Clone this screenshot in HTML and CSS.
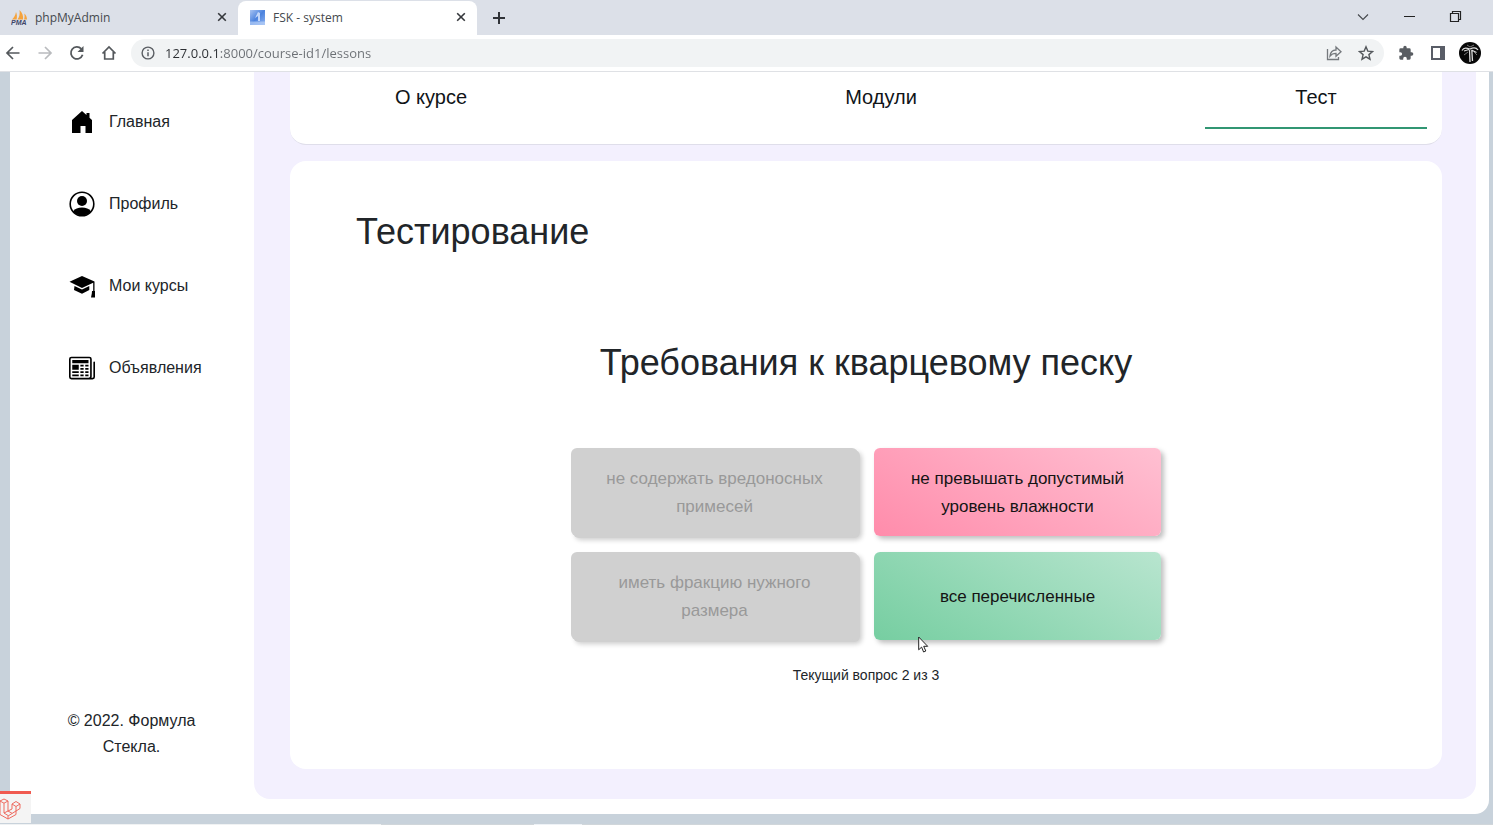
FILE: index.html
```html
<!DOCTYPE html>
<html lang="ru">
<head>
<meta charset="utf-8">
<meta name="viewport" content="width=device-width, initial-scale=1">
<title>FSK - system</title>
<link rel="stylesheet" href="styles.css">
</head>
<body>
<div class="browser">
  <div class="tabstrip">
    <div class="tab">
      <svg class="favicon" viewBox="0 0 17 17" aria-hidden="true">
        <path d="M1 10.500C3 9 4.500 6 5 3c1 2 1.200 5 .6 7.500zM6.500 10.500C8.500 8 9 5 8.500 1c3 3 4 6 3.500 9.500zM13 10.500c.8-2 .7-4 .2-6 2 1.500 2.800 4 2.800 6z" fill="#f5a33c"/>
        <text class="pma" x="0" y="16">PMA</text>
      </svg>
      <span class="tab-title">phpMyAdmin</span>
      <button class="icon-btn tab-close" aria-label="Закрыть вкладку phpMyAdmin"><svg width="10" height="10" viewBox="0 0 10 10"><path d="M1.200 1.200l7.600 7.600M8.800 1.200L1.200 8.800" stroke="#34373b" stroke-width="1.600"/></svg></button>
    </div>
    <div class="tab tab-active">
      <svg class="favicon" viewBox="0 0 17 17" aria-hidden="true">
        <defs><linearGradient id="fsk" x1="0" y1="0" x2="1" y2="1"><stop offset="0" stop-color="#a9c4f2"/><stop offset=".5" stop-color="#4c83de"/><stop offset="1" stop-color="#8fb3f0"/></linearGradient></defs>
        <rect x="1" y="1" width="15" height="15" fill="url(#fsk)"/>
        <path d="M9 3l2 1v8H9V7L6 9z" fill="#dce8ff" opacity=".8"/><path d="M1 12.500h15V16H1z" fill="#b8d0f8" opacity=".7"/>
      </svg>
      <span class="tab-title">FSK - system</span>
      <button class="icon-btn tab-close" aria-label="Закрыть вкладку FSK"><svg width="10" height="10" viewBox="0 0 10 10"><path d="M1.200 1.200l7.600 7.600M8.800 1.200L1.200 8.800" stroke="#34373b" stroke-width="1.600"/></svg></button>
    </div>
    <button class="icon-btn new-tab" aria-label="Новая вкладка"><svg width="14" height="14" viewBox="0 0 14 14"><path d="M7 1v12M1 7h12" stroke="#303338" stroke-width="2"/></svg></button>
    <div class="window-controls">
      <button class="icon-btn" aria-label="Поиск вкладок"><svg width="14" height="14" viewBox="0 0 14 14"><path d="M2 4.500l5 5 5-5" fill="none" stroke="#44474b" stroke-width="1.100"/></svg></button>
      <button class="icon-btn" aria-label="Свернуть"><svg width="14" height="14" viewBox="0 0 14 14"><path d="M2 6.500h11" stroke="#222" stroke-width="1"/></svg></button>
      <button class="icon-btn" aria-label="Развернуть"><svg width="14" height="14" viewBox="0 0 14 14"><path d="M2.500 3.500h8v8h-8zM4.500 3.500v-2h8v8h-2" fill="none" stroke="#222" stroke-width="1.200"/></svg></button>
    </div>
  </div>

  <div class="toolbar">
    <div class="nav-buttons">
      <button class="icon-btn" aria-label="Назад"><svg width="16" height="16" viewBox="0 0 16 16"><path d="M14.500 8H2.500M8 2L2 8l6 6" fill="none" stroke="#54585c" stroke-width="1.700"/></svg></button>
      <button class="icon-btn" aria-label="Вперёд"><svg width="16" height="16" viewBox="0 0 16 16"><path d="M1.500 8h12M8 2l6 6-6 6" fill="none" stroke="#b9bbbe" stroke-width="1.700"/></svg></button>
      <button class="icon-btn" aria-label="Обновить"><svg width="16" height="16" viewBox="0 0 16 16"><path d="M13.600 9.800A6 6 0 1 1 12.300 3.800" fill="none" stroke="#54585c" stroke-width="1.800"/><path d="M14.500 1v6h-6z" fill="#54585c"/></svg></button>
      <button class="icon-btn" aria-label="Домой"><svg width="16" height="16" viewBox="0 0 16 16"><path d="M1.500 8.500L8 2l6.500 6.500M3.700 7v7h8.600V7" fill="none" stroke="#54585c" stroke-width="1.700"/></svg></button>
    </div>
    <div class="omnibox">
      <svg width="14" height="14" viewBox="0 0 14 14" aria-hidden="true"><circle cx="7" cy="7" r="5.900" fill="none" stroke="#5a5e63" stroke-width="1.400"/><path d="M7 6.200v4M7 3.500V5" stroke="#5a5e63" stroke-width="1.500"/></svg>
      <input class="url" type="text" aria-label="Адресная строка" value="127.0.0.1:8000/course-id1/lessons">
      <button class="icon-btn" aria-label="Поделиться"><svg width="16" height="16" viewBox="0 0 16 16"><path d="M1.500 4v10.500h11V12" fill="none" stroke="#75797d" stroke-width="1.300"/><path d="M4 11c.5-4 2.500-6 6-6V2l5 4.700-5 4.500V8.300C7.500 8.300 5.500 9 4 11z" fill="none" stroke="#75797d" stroke-width="1.300"/></svg></button>
      <button class="icon-btn" aria-label="Добавить в закладки"><svg width="16" height="16" viewBox="0 0 16 16"><path d="M8 1.800l1.800 4.300 4.700.4-3.600 3.100 1.100 4.600L8 11.800l-4 2.400 1.100-4.600-3.600-3.100 4.700-.4z" fill="none" stroke="#54585c" stroke-width="1.400"/></svg></button>
    </div>
    <div class="extensions">
      <button class="icon-btn" aria-label="Расширения"><svg width="16" height="16" viewBox="0 0 24 24"><path d="M20.500 11H19V7a2 2 0 0 0-2-2h-4V3.500a2.500 2.500 0 0 0-5 0V5H4a2 2 0 0 0-2 2v3.800h1.500a2.700 2.700 0 0 1 0 5.400H2V20a2 2 0 0 0 2 2h3.800v-1.500a2.700 2.700 0 0 1 5.400 0V22H17a2 2 0 0 0 2-2v-4h1.500a2.500 2.500 0 0 0 0-5z" fill="#595d62"/></svg></button>
      <button class="icon-btn" aria-label="Боковая панель"><svg width="16" height="16" viewBox="0 0 16 16"><path d="M1 1h14v14H1zM3 3v10h7V3z" fill="#595d67" fill-rule="evenodd"/></svg></button>
      <button class="icon-btn avatar" aria-label="Профиль браузера"><svg width="22" height="22" viewBox="0 0 22 22"><circle cx="11" cy="11" r="11" fill="#080808"/><path d="M3 8.500C5 5 8 6 11 7c3-1.500 6-2 8 1M5 9l5-1.500M12.500 8l5 2.500M10.500 8l.5 12M12.800 8l.7 11" fill="none" stroke="#dcdcdc" stroke-width="1.300"/><path d="M5 13l4-3M15 10l3 3M8 3l3 2 4-2" fill="none" stroke="#777"/></svg></button>
    </div>
  </div>

  <div class="viewport">
    <div class="shell">
      <aside class="sidebar">
        <nav class="menu" aria-label="Меню">
          <a class="menu-link" href="#"><svg width="26" height="26" viewBox="0 0 26 26" aria-hidden="true"><path d="M13 2l4.500 4V4h3v4.700L23 11v13h-6.500v-7h-5v7H3V11z"/></svg>Главная</a>
          <a class="menu-link" href="#"><svg width="26" height="26" viewBox="0 0 26 26" aria-hidden="true"><circle cx="13" cy="13" r="11.800" fill="none" stroke="#000" stroke-width="1.600"/><circle cx="13" cy="10" r="5"/><path d="M4 20.500c2-3 5-4 9-4s7 1 9 4a11.800 11.800 0 0 1-18 0z"/></svg>Профиль</a>
          <a class="menu-link" href="#"><svg width="26" height="26" viewBox="0 0 26 26" aria-hidden="true"><path d="M13 3l12.500 5.500v10h-1.300V9.800L13 15 .5 8.700zM5.500 13l7.500 3.600 7.300-3.500v4L13 20.700 5 17zM23 18h3v2.500l.5 4H22l.8-4z"/></svg>Мои курсы</a>
          <a class="menu-link" href="#"><svg width="26" height="26" viewBox="0 0 16 16" aria-hidden="true"><path d="M0 2.500A1.500 1.500 0 0 1 1.500 1h11A1.500 1.500 0 0 1 14 2.500v10.528c0 .3-.05.654-.238.972h.738a.5.5 0 0 0 .5-.5v-9a.5.5 0 0 1 1 0v9a1.500 1.500 0 0 1-1.500 1.500H1.497A1.497 1.497 0 0 1 0 13.500zM12 14c.37 0 .654-.211.853-.441.092-.106.147-.279.147-.531V2.500a.5.5 0 0 0-.5-.5h-11a.5.5 0 0 0-.5.5v11c0 .278.223.5.497.5z"/><path d="M2 3h10v2H2zm0 3h4v3H2zm0 4h4v1H2zm0 2h4v1H2zm5-6h2v1H7zm3 0h2v1h-2zM7 8h2v1H7zm3 0h2v1h-2zm-3 2h2v1H7zm3 0h2v1h-2zm-3 2h2v1H7zm3 0h2v1h-2z"/></svg>Объявления</a>
        </nav>
        <p class="copyright">© 2022. Формула Стекла.</p>
      </aside>

      <main class="content">
        <nav class="course-tabs" aria-label="Разделы курса">
          <a class="course-tab" href="#">О курсе</a>
          <a class="course-tab" href="#">Модули</a>
          <a class="course-tab course-tab-active" href="#" aria-current="page">Тест</a>
        </nav>
        <section class="card">
          <h1 class="heading">Тестирование</h1>
          <h2 class="heading question">Требования к кварцевому песку</h2>
          <div class="answers">
            <button class="answer answer-off" disabled>не содержать вредоносных примесей</button>
            <button class="answer answer-wrong">не превышать допустимый уровень влажности</button>
            <button class="answer answer-off" disabled>иметь фракцию нужного размера</button>
            <button class="answer answer-right">все перечисленные</button>
          </div>
          <p class="progress">Текущий вопрос 2 из 3</p>
        </section>
      </main>
    </div>
    <button class="debugbar" aria-label="Laravel Debugbar"><svg width="24" height="24" viewBox="0 0 24 24"><path d="M0 4l4-2 4 2v10l4-2V7l4-2.500L20 7v4.500L16 14l-8 5v3l-8-4.500zM0 4l4 2.200L8 4M4 6.200V16l4 2.500M12 7l4 2.500L20 7M16 9.500V14M4 16l4-2M8 14l4 2.300M8 22l8-4.500V14" fill="none" stroke="#ee6a5f" stroke-width="1"/></svg></button>
  </div>
  <div class="desktop-edge"><span class="edge-light"></span><span class="edge-button"></span></div>
  <svg class="cursor" width="12" height="18" viewBox="0 0 12 18" aria-hidden="true"><path d="M.7 1v12.800l2.900-2.700 2 4.900 2.200-1-2.100-4.700h4z" fill="#fff" stroke="#222" stroke-width="1"/></svg>
</div>
</body>
</html>
```

FILE: styles.css
```css
* { box-sizing: border-box; }

body {
  margin: 0;
  font-family: "Liberation Sans", Arial, sans-serif;
  color: #212529;
}

a { color: inherit; text-decoration: none; }
h1, h2, p { margin: 0; }

.browser {
  position: relative;
  display: flex;
  flex-direction: column;
  min-height: 100vh;
  background: #c8d2db;
}

.icon-btn {
  display: flex;
  align-items: center;
  justify-content: center;
  padding: 0;
  border: 0;
  background: none;
}

/* Browser chrome */
.tabstrip {
  display: flex;
  align-items: stretch;
  height: 35px;
  padding-top: 1px;
  background: #dce0e8;
  font-family: "Open Sans", "Noto Sans", sans-serif;
  font-size: 12px;
  color: #45494e;
}

.tab {
  display: flex;
  align-items: center;
  gap: 7px;
  width: 238px;
  padding: 0 10px 2px 11px;
}

.tab-active {
  width: 239px;
  border-radius: 8px 8px 0 0;
  background: #fff;
}

.favicon { width: 17px; height: 17px; }
.pma { font: italic bold 7px "Liberation Sans", sans-serif; fill: #3d4468; }
.tab-title { flex: 1; }
.tab-close { width: 12px; height: 12px; }
.new-tab { width: 44px; }

.window-controls {
  display: flex;
  gap: 32px;
  margin-left: auto;
  padding: 0 31px 2px 0;
}

.toolbar {
  display: flex;
  align-items: center;
  gap: 14px;
  height: 37px;
  padding: 0 12px 0 5px;
  border-bottom: 1px solid #dfe1e5;
  background: #fff;
}

.nav-buttons { display: flex; gap: 16px; }

.omnibox {
  display: flex;
  flex: 1;
  align-items: center;
  gap: 16px;
  height: 28px;
  padding: 0 10px;
  border-radius: 14px;
  background: #f1f3f4;
}

.url {
  flex: 1;
  min-width: 0;
  margin-left: -6px;
  padding: 0;
  border: 0;
  outline: 0;
  background: linear-gradient(90deg, #2b2e32 54px, #6b6f74 54px);
  background-clip: text;
  -webkit-background-clip: text;
  color: transparent;
  font-family: "Open Sans", "Noto Sans", sans-serif;
  font-size: 13px;
}

.extensions { display: flex; align-items: center; gap: 16px; }
.avatar { margin-left: -3px; }

/* Page shell */
.viewport {
  position: relative;
  display: flex;
  flex: 1;
  padding: 0 4px 10px 10px;
}

.shell {
  display: flex;
  flex: 1;
  padding: 0 13px 15px 0;
  border-radius: 0 0 14px 0;
  background: #fff;
}

.sidebar {
  display: flex;
  flex-direction: column;
  justify-content: space-between;
  width: 244px;
  padding: 37px 46px 39px 59px;
}

.menu { display: flex; flex-direction: column; gap: 56px; }

.menu-link {
  display: flex;
  align-items: center;
  gap: 14px;
  font-size: 16px;
  line-height: 26px;
}

.copyright {
  margin: 0 9px 0 -5px;
  font-size: 16px;
  line-height: 26px;
  text-align: center;
}

.content {
  display: flex;
  flex: 1;
  flex-direction: column;
  gap: 16px;
  padding: 0 34px 30px 36px;
  border-radius: 0 0 16px 16px;
  background: #f3f0fe;
}

/* Course navigation */
.course-tabs {
  display: flex;
  justify-content: space-between;
  padding: 10px 15px 15px;
  border-bottom: 1px solid #dfdeea;
  border-radius: 0 0 16px 16px;
  background: #fff;
}

.course-tab {
  width: 222px;
  margin: 0 15px;
  padding-bottom: 15px;
  border-bottom: 2px solid transparent;
  color: #101418;
  font-size: 20px;
  line-height: 30px;
  text-align: center;
}

.course-tab-active { margin: 0; border-color: #319673; }

/* Test card */
.card {
  flex: 1;
  padding: 49px 66px;
  border-radius: 16px;
  background: #fff;
}

.heading { font-size: 36px; font-weight: 400; line-height: 43px; }
.question { margin-top: 88px; text-align: center; }

.answers {
  display: grid;
  grid-template-columns: 1fr 1fr;
  grid-auto-rows: 88px;
  gap: 16px;
  max-width: 590px;
  margin: 64px auto 25px;
}

.answer {
  padding: 2px 24px 0;
  border: 0;
  border-radius: 6px;
  box-shadow: 3px 3px 5px rgba(0, 0, 0, 0.25);
  color: #141414;
  font-family: inherit;
  font-size: 17px;
  line-height: 28px;
}

.answer-off {
  background: #d0d0d0;
  box-shadow: 2px 2px 0 #d0d0d0, 4px 4px 5px rgba(0, 0, 0, 0.2);
  color: #999;
}

.answer-wrong { background: linear-gradient(30deg, #ff8cab, #ffc0d2); }
.answer-right { background: linear-gradient(30deg, #76cea1, #b8e5cf); }

.progress { font-size: 14px; line-height: 21px; text-align: center; }

/* Overlays */
.debugbar {
  position: absolute;
  bottom: 1px;
  left: 0;
  display: flex;
  align-items: center;
  width: 31px;
  height: 32px;
  padding: 0;
  border: 0;
  border-top: 3px solid #f05a50;
  background: #f4f4f4;
}

.desktop-edge { display: flex; height: 1px; background: #d0d6da; }
.edge-light { width: 381px; background: #f0f2f3; }
.edge-button { width: 48px; margin-left: 153px; background: #eef2f6; }

.cursor { position: absolute; top: 636px; left: 918px; }
```
